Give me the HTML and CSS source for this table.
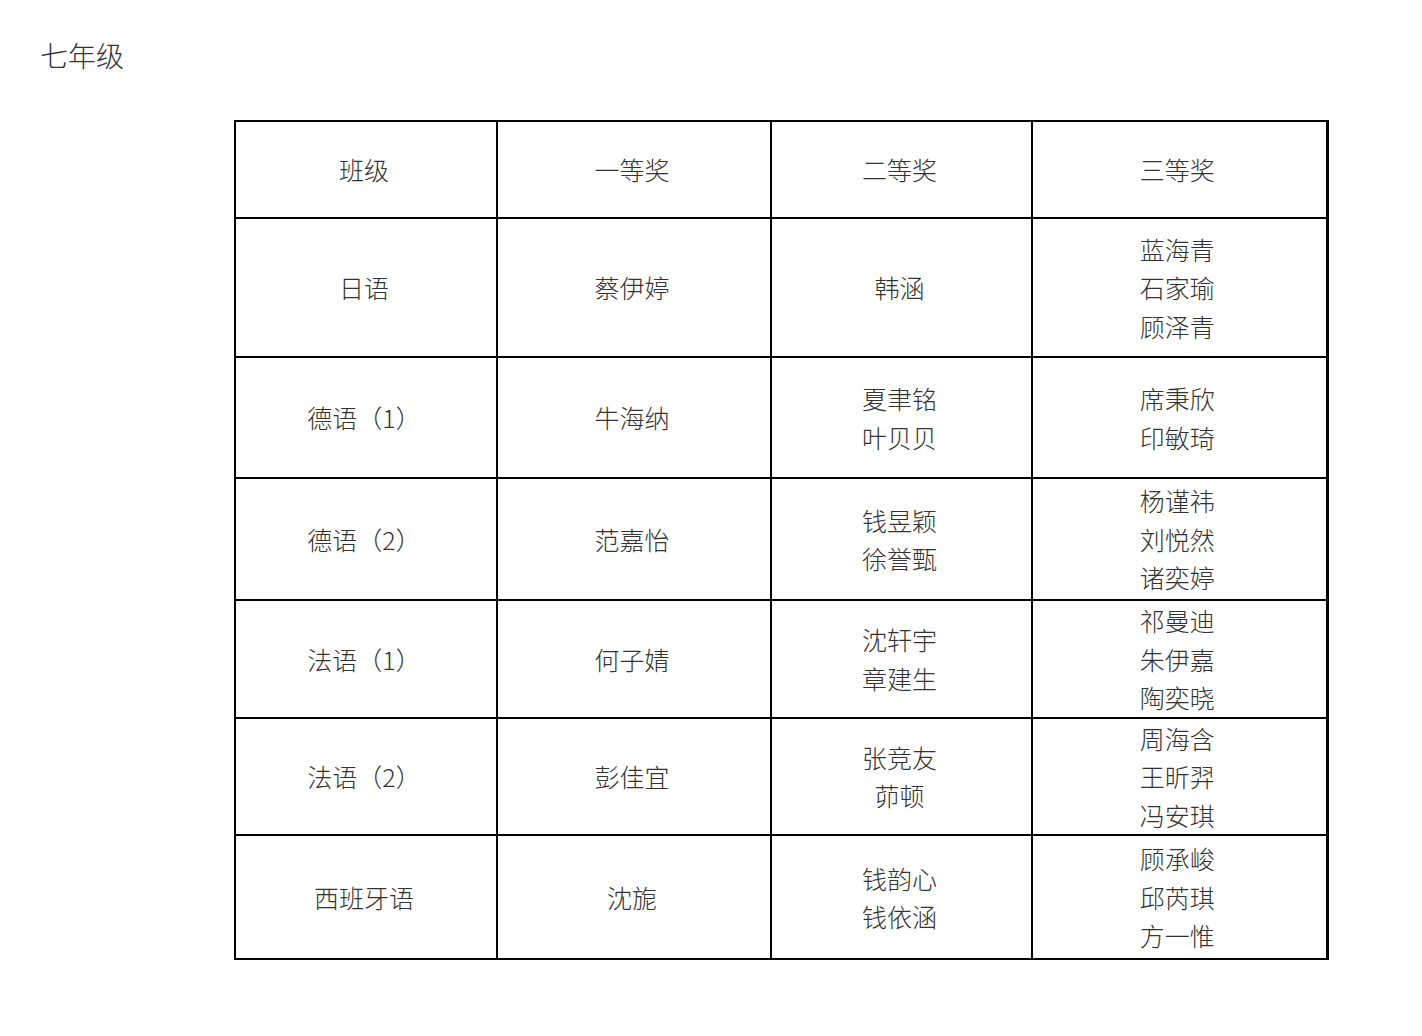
FILE: index.html
```html
<!DOCTYPE html>
<html lang="zh">
<head>
<meta charset="utf-8">
<title>七年级</title>
<link rel="stylesheet" href="styles.css">
</head>
<body>
<h1 class="title">七年级</h1>
<table class="awards">
  <colgroup>
    <col class="c1"><col class="c2"><col class="c3"><col class="c4">
  </colgroup>
  <tr class="r0"><td>班级</td><td>一等奖</td><td>二等奖</td><td>三等奖</td></tr>
  <tr class="r1"><td>日语</td><td>蔡伊婷</td><td>韩涵</td><td>蓝海青<br>石家瑜<br>顾泽青</td></tr>
  <tr class="r2"><td>德语（1）</td><td>牛海纳</td><td>夏聿铭<br>叶贝贝</td><td>席秉欣<br>印敏琦</td></tr>
  <tr class="r3"><td>德语（2）</td><td>范嘉怡</td><td>钱昱颖<br>徐誉甄</td><td>杨谨祎<br>刘悦然<br>诸奕婷</td></tr>
  <tr class="r4"><td>法语（1）</td><td>何子婧</td><td>沈轩宇<br>章建生</td><td>祁曼迪<br>朱伊嘉<br>陶奕晓</td></tr>
  <tr class="r5"><td>法语（2）</td><td>彭佳宜</td><td>张竞友<br>茆顿</td><td>周海含<br>王昕羿<br>冯安琪</td></tr>
  <tr class="r6"><td>西班牙语</td><td>沈旎</td><td>钱韵心<br>钱依涵</td><td>顾承峻<br>邱芮琪<br>方一惟</td></tr>
</table>
</body>
</html>
```
FILE: styles.css
```css
html, body {
  margin: 0;
  padding: 0;
  background: #fff;
}
body {
  font-family: "Noto Sans CJK SC", "Noto Sans", sans-serif;
  color: #333;
}
.title {
  margin: 0;
  padding: 37px 0 0 40px;
  font-size: 28px;
  font-weight: 300;
  line-height: 36px;
  color: #333;
}
.awards {
  margin: 47px 0 0 234px;
  border-collapse: collapse;
  table-layout: fixed;
  width: 1092px;
  font-size: 25px;
  font-weight: 300;
  line-height: 38.5px;
}
.awards td {
  border: 2px solid #000;
  text-align: center;
  vertical-align: middle;
  padding: 0 4px 0 0;
}
.awards td:last-child {
  border-right-width: 3px;
}
.c1 { width: 262px; }
.c2 { width: 274px; }
.c3 { width: 261px; }
.c4 { width: 295px; }
.r0 { height: 97px; }
.r1 { height: 139px; }
.r2 { height: 121px; }
.r3 { height: 122px; }
.r4 { height: 117px; }
.r5 { height: 115px; }
.r6 { height: 124px; }
```
